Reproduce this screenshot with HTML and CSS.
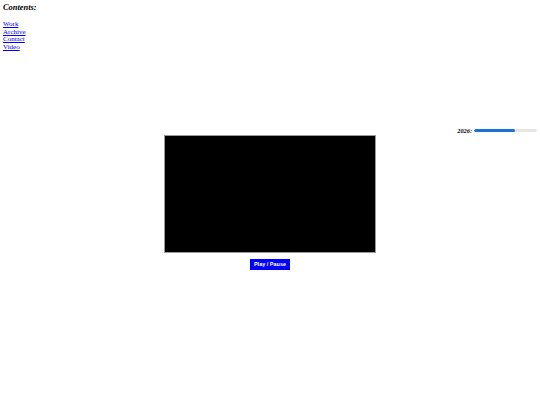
FILE: index.html
```html
<!DOCTYPE html>
<html>
<head>
<meta charset="utf-8">
<link rel="stylesheet" href="styles.css">
</head>
<body>
<nav class="toc">
  <h2 class="toc-title">Contents:</h2>
  <ul class="toc-list">
    <li><a href="#">Work</a></li>
    <li><a href="#">Archive</a></li>
    <li><a href="#">Contact</a></li>
    <li><a href="#">Video</a></li>
  </ul>
</nav>
<div class="year-row">
  <span class="year-label">2026:</span>
  <div class="progress"><div class="progress-fill" style="width:65%"></div></div>
</div>
<div class="player">
  <div class="screen"></div>
  <button class="play-btn">Play / Pause</button>
</div>
</body>
</html>
```
FILE: styles.css
```css
html, body { margin: 0; padding: 0; background: #fff; }
body {
  padding: 3px 3px;
  font-family: "Liberation Serif", serif;
  color: #000;
}
.toc-title {
  margin: 0;
  font-size: 8.4px;
  line-height: 10px;
  font-style: italic;
  font-weight: bold;
}
.toc-list {
  list-style: none;
  margin: 8px 0 0 0;
  padding: 0;
  font-size: 7px;
  line-height: 7.5px;
}
.toc-list a { color: #0000ee; }
.year-row {
  margin-top: 76px;
  display: flex;
  justify-content: flex-end;
  align-items: center;
  gap: 2px;
}
.year-label {
  font-size: 6.3px;
  font-weight: bold;
  font-style: italic;
  line-height: 7px;
}
.progress {
  width: 63px;
  height: 3px;
  background: #e6e6e6;
  border-radius: 2px;
  overflow: hidden;
}
.progress-fill { height: 100%; background: #1a73d9; border-radius: 2px; }
.player {
  display: flex;
  flex-direction: column;
  align-items: center;
  margin-top: 1px;
}
.screen {
  width: 210px;
  height: 116px;
  background: #000;
  border: 1px solid #999;
}
.play-btn {
  margin-top: 6px;
  background: #0000ff;
  color: #fff;
  border: none;
  font-family: "Liberation Sans", sans-serif;
  font-size: 5.5px;
  font-weight: bold;
  padding: 3px 4px;
  line-height: 5px;
}
```
